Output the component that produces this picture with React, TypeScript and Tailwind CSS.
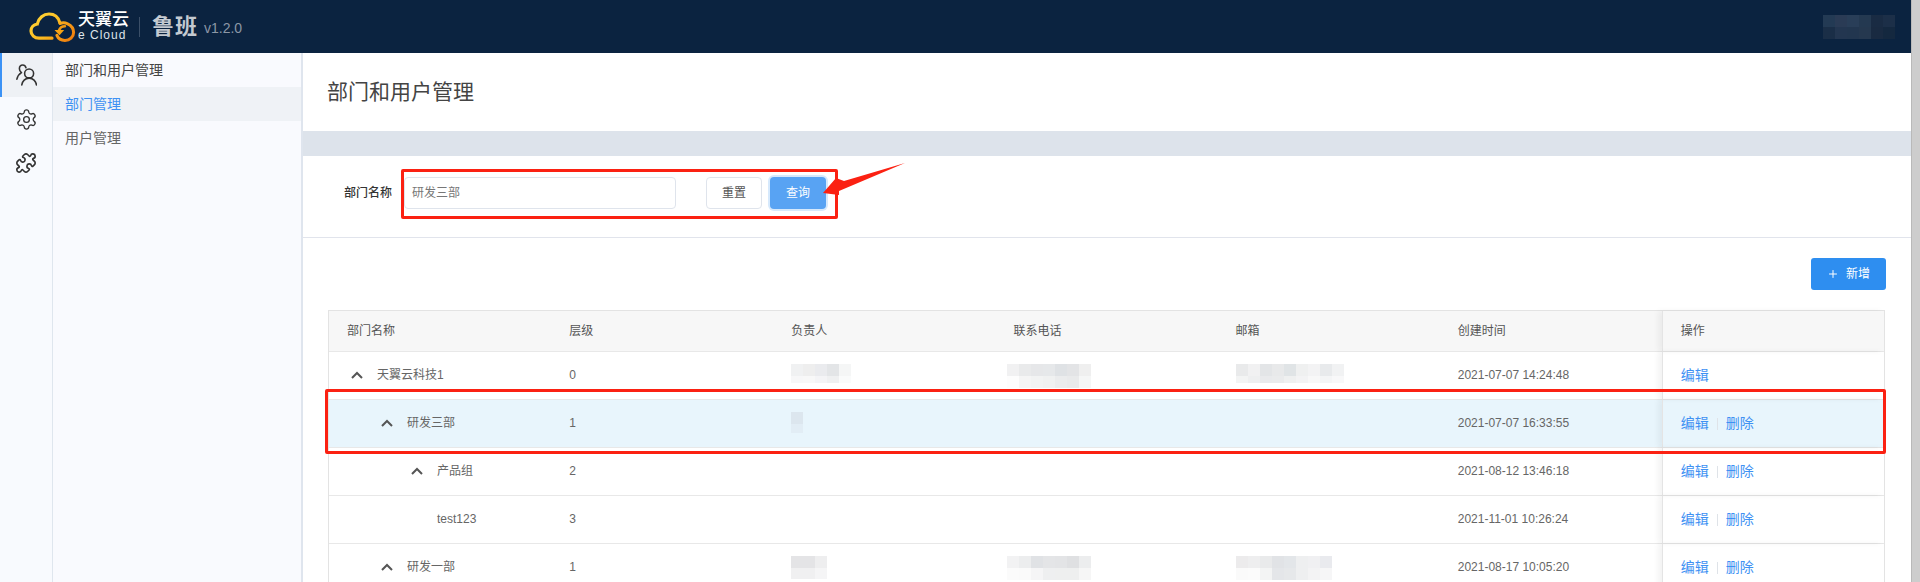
import React from "react";
import { Settings, Puzzle, Plus } from "lucide-react";

const font = { fontFamily: '"Liberation Sans","Noto Sans CJK SC",sans-serif' };

function Mosaic({ rows, h2 = 12, className = "" }: { rows: string[][]; h2?: number; className?: string }) {
  return (
    <div className={"flex flex-col " + className}>
      {rows.map((r, i) => (
        <div key={i} className="flex">
          {r.map((c, j) => (
            <div key={j} className="w-[12px]" style={{ background: c, height: i === 1 ? h2 : 12 }} />
          ))}
        </div>
      ))}
    </div>
  );
}

function Logo() {
  return (
    <svg width="47" height="30" viewBox="0 0 47 30" fill="none" className="shrink-0">
      <defs>
        <linearGradient id="lg1" x1="0" y1="0" x2="1" y2="1">
          <stop offset="0" stopColor="#ffd83a" />
          <stop offset="0.7" stopColor="#fbb81f" />
          <stop offset="1" stopColor="#f59a10" />
        </linearGradient>
        <linearGradient id="lg2" x1="0" y1="0" x2="1" y2="1">
          <stop offset="0" stopColor="#fbb01e" />
          <stop offset="1" stopColor="#ee7a0c" />
        </linearGradient>
      </defs>
      <path d="M23 26.2H10C5.5 26.2 2 23 2 19c0-3.6 2.6-6.4 6.3-7C9.6 6 14.6 2 20 2c5.4 0 9.4 3.4 10.8 8.6" stroke="url(#lg1)" strokeWidth="3.2" strokeLinecap="round" />
      <path d="M31 11.5c2-.8 5-.9 7.6.3 3.5 1.6 6 4.900 6 8.600 0 4.700-3.900 8-8.600 8-3.800 0-6.800-1.900-8.100-5" stroke="url(#lg2)" strokeWidth="3" strokeLinecap="round" />
      <path d="M30 18.500c.8-2.600 3.100-4.300 5.900-4.300" stroke="#f39a12" strokeWidth="2.600" strokeLinecap="round" />
      <path d="M25.500 18l5 5.300 4.700-5.300z" fill="#f7a313" />
    </svg>
  );
}

function UsersIcon() {
  return (
    <svg width="21" height="23" viewBox="0 0 20 22" fill="none" stroke="#333" strokeWidth="1.500" strokeLinecap="round" strokeLinejoin="round">
      <circle cx="12.500" cy="9" r="4.300" />
      <path d="M9.500 3.600C9 2.100 7.900 1 6.500 1 4.400 1 3.200 2.800 3.200 4.600c0 1.600.700 2.800 2 3.600C3 9.500 1.300 11.800.800 14.500" />
      <path d="M5.500 20c.4-3.600 3.300-6.500 7-6.500s6.600 2.900 7 6.500" />
    </svg>
  );
}

function Chevron() {
  return (
    <svg width="12" height="8" viewBox="0 0 12 8" fill="none" stroke="#555" strokeWidth="2" className="shrink-0 mr-[14px]">
      <path d="M1 7l5-5 5 5" />
    </svg>
  );
}

const Sep = () => <span className="inline-block w-px h-[12px] bg-[#dfe3e8] mx-[8px]" />;

type Row = {
  name: string; level: number; tier: string; time: string; del: boolean; chevron: boolean; sel?: boolean;
  owner?: React.ReactNode; phone?: React.ReactNode; mail?: React.ReactNode;
};

const rows: Row[] = [
  {
    name: "天翼云科技1", level: 0, tier: "0", time: "2021-07-07 14:24:48", del: false, chevron: true,
    owner: <Mosaic h2={7} rows={[["#f0f1f2", "#eeeeee", "#eaebee", "#e3e5e7", "#f5f6f6"], ["#f7f7f8", "#f8f8f8", "#f4f4f6", "#eff0f1", "#fafbfb"]]} />,
    phone: <Mosaic rows={[["#f1f1f2", "#e9eaeb", "#e6e7e9", "#e6e8ea", "#dfe2e5", "#e3e4e6", "#efefef"], ["#fdfdfd", "#f5f5f5", "#f2f3f3", "#f0f1f1", "#ebeced", "#e9eaeb", "#f5f6f6"]]} />,
    mail: <Mosaic h2={7} rows={[["#e9eaeb", "#f1f1f2", "#e3e5e7", "#e8e9ea", "#e0e4e6", "#eff0f0", "#f3f3f4", "#e8eaec", "#f1f2f3"], ["#f3f4f4", "#eeeff0", "#e9eaec", "#eaebec", "#eff0f0", "#f3f3f4", "#f8f8f8", "#f4f5f6", "#f8f8f9"]]} />,
  },
  {
    name: "研发三部", level: 1, tier: "1", time: "2021-07-07 16:33:55", del: true, chevron: true, sel: true,
    owner: <Mosaic h2={9} rows={[["#dce6ee"], ["#e2edf5"]]} />,
  },
  { name: "产品组", level: 2, tier: "2", time: "2021-08-12 13:46:18", del: true, chevron: true },
  { name: "test123", level: 2, tier: "3", time: "2021-11-01 10:26:24", del: true, chevron: false },
  {
    name: "研发一部", level: 1, tier: "1", time: "2021-08-17 10:05:20", del: true, chevron: true,
    owner: <Mosaic h2={11} rows={[["#e4e4e6", "#e4e4e6", "#eeeeef"], ["#f0f0f1", "#f0f0f1", "#f5f5f6"]]} />,
    phone: <Mosaic rows={[["#f2f2f3", "#ecedee", "#e0e2e5", "#e4e5e7", "#e3e4e6", "#dfe0e2", "#ecedee"], ["#fbfbfb", "#fafafa", "#f5f5f6", "#eeeff0", "#eeefef", "#eeefef", "#f6f6f6"]]} />,
    mail: <Mosaic rows={[["#ecebec", "#eeeeef", "#e9eaeb", "#e1e3e6", "#e3e6e9", "#eeeff0", "#f0f0f2", "#e9eaee"], ["#fafafa", "#fbfbfb", "#f3f4f4", "#e4e6e9", "#e6e8ea", "#eeeff0", "#f3f3f4", "#f6f6f7"]]} />,
  },
];

const cols = ["部门名称", "层级", "负责人", "联系电话", "邮箱", "创建时间", "操作"];

export default function App() {
  return (
    <div className="relative flex h-[582px] overflow-hidden bg-white text-[12px] text-[#666]" style={font}>
      <div className="flex-1 min-w-0 flex flex-col">
        <header className="h-[53px] shrink-0 bg-[#0b2340] flex items-center pl-[29px] pr-[16px]">
          <Logo />
          <div className="ml-[2px] flex flex-col w-[52px] -mt-[1px] text-white">
            <span className="text-[17px] leading-[18px] font-medium">天翼云</span>
            <span className="text-[12px] leading-[12px] tracking-[1px] text-[#dfe4ea]">e Cloud</span>
          </div>
          <div className="w-px h-[20px] bg-[#3b4f68] ml-[9px]" />
          <span className="ml-[12px] text-[22px] leading-[24px] font-bold tracking-[1px] text-[#c4cad1]">鲁班</span>
          <span className="ml-[6px] mt-[3px] text-[14px] text-[#8c97a6]">v1.2.0</span>
          <div className="ml-auto">
            <Mosaic rows={[["#233a54", "#2a3b55", "#293e58", "#243951", "#192b43", "#1c2f48"], ["#1a2e47", "#233650", "#22364f", "#25384f", "#192a41", "#14283f"]]} />
          </div>
        </header>
        <div className="flex-1 min-h-0 flex">
          <nav className="w-[53px] shrink-0 bg-[#f8fafe] border-r border-[#dfe6ee] flex flex-col">
            <div className="h-[44px] bg-[#eef1f5] border-l-2 border-[#3b92f5] flex items-center justify-center pr-[1px]">
              <UsersIcon />
            </div>
            <div className="h-[44px] flex items-center justify-center">
              <Settings size={23} strokeWidth={1.400} color="#333" />
            </div>
            <div className="h-[44px] flex items-center justify-center">
              <Puzzle size={22} strokeWidth={1.800} color="#333" />
            </div>
          </nav>
          <aside className="w-[250px] shrink-0 bg-[#f9fafe] border-r-2 border-[#dfe5ee] text-[14px]">
            <div className="h-[34px] flex items-center pl-[12px] pt-[1px] text-[#444]">部门和用户管理</div>
            <div className="h-[34px] flex items-center pl-[12px] pt-[1px] bg-[#eff2f6] text-[#3e91f3]">部门管理</div>
            <div className="h-[34px] flex items-center pl-[12px] pt-[1px] text-[#666]">用户管理</div>
          </aside>
          <main className="flex-1 min-w-0 flex flex-col">
            <div className="h-[78px] shrink-0 flex items-center pl-[24px] text-[21px] text-[#444]">部门和用户管理</div>
            <div className="h-[25px] shrink-0 bg-[#dde3eb]" />
            <div className="h-[82px] shrink-0 border-b border-[#e1e4ec] pt-[21px] pl-[41px] flex items-start">
              <label className="w-[48px] h-[32px] leading-[32px] font-medium text-[#333] mr-[12px]">部门名称</label>
              <div className="w-[272px] h-[32px] border border-[#dfe4ec] rounded-[4px] pl-[7px] leading-[30px] text-[#777]">研发三部</div>
              <button className="ml-[30px] w-[56px] h-[32px] border border-[#dfe4ec] rounded-[4px] bg-white text-[#555]">重置</button>
              <button className="ml-[8px] w-[56px] h-[32px] rounded-[4px] bg-[#58a3f3] text-white shadow-[0_0_0_2px_#d6e9fc]">查询</button>
            </div>
            <div className="flex justify-end pt-[20px] pr-[25px]">
              <button className="w-[75px] h-[32px] rounded-[3px] bg-[#2e8ef0] text-white flex items-center justify-center gap-[7px]">
                <Plus size={12} strokeWidth={2} />
                <span>新增</span>
              </button>
            </div>
            <div className="ml-[25px] mr-[26px] mt-[20px] border border-[#e3e3e3] border-b-0">
              <div className="grid grid-cols-7 h-[41px] bg-[#f7f7f7] border-b border-[#e8e8e8] text-[#555]">
                {cols.map((c, i) => (
                  <div key={c} className={"flex items-center pl-[18px] " + (i === 6 ? "border-l border-[#e4e4e4] shadow-[-4px_0_6px_rgba(0,0,0,0.05)]" : "")}>{c}</div>
                ))}
              </div>
              {rows.map((r) => (
                <div key={r.name} className={"grid grid-cols-7 h-[48px] border-b border-[#e8e8e8] " + (r.sel ? "bg-[#e8f5fc]" : "bg-white")}>
                  <div className="flex items-center -translate-y-px" style={{ paddingLeft: 22 + r.level * 30 }}>
                    {r.chevron ? <Chevron /> : <span className="w-[26px]" />}
                    <span>{r.name}</span>
                  </div>
                  <div className="flex items-center pl-[18px] -translate-y-px">{r.tier}</div>
                  <div className="flex items-start pl-[18px] pt-[12px]">{r.owner}</div>
                  <div className="flex items-start pl-[12px] pt-[12px]">{r.phone}</div>
                  <div className="flex items-start pl-[18px] pt-[12px]">{r.mail}</div>
                  <div className="flex items-center pl-[18px] -translate-y-px">{r.time}</div>
                  <div className="flex items-center pl-[18px] border-l border-[#e4e4e4] shadow-[-4px_0_6px_rgba(0,0,0,0.05)] text-[14px] text-[#3e91f3]">
                    <span>编辑</span>
                    {r.del && <Sep />}
                    {r.del && <span>删除</span>}
                  </div>
                </div>
              ))}
            </div>
          </main>
        </div>
      </div>
      <div className="w-[9px] shrink-0 bg-[#cdcdcd] border-l border-[#b9b9b9]" />

      <div className="absolute left-[401px] top-[169px] w-[437px] h-[50px] border-[3px] border-[#fb2112] rounded-[2px] pointer-events-none" />
      <div className="absolute left-[325px] top-[389px] w-[1561px] h-[65px] border-[3px] border-[#fb2112] rounded-[2px] pointer-events-none" />
      <svg className="absolute left-[822px] top-[158px] pointer-events-none" width="90" height="44" viewBox="0 0 90 44">
        <path d="M83 5 L22 23 L14 20 L1 35 L17 37 L17 33z" fill="#fb2112" />
      </svg>
    </div>
  );
}
